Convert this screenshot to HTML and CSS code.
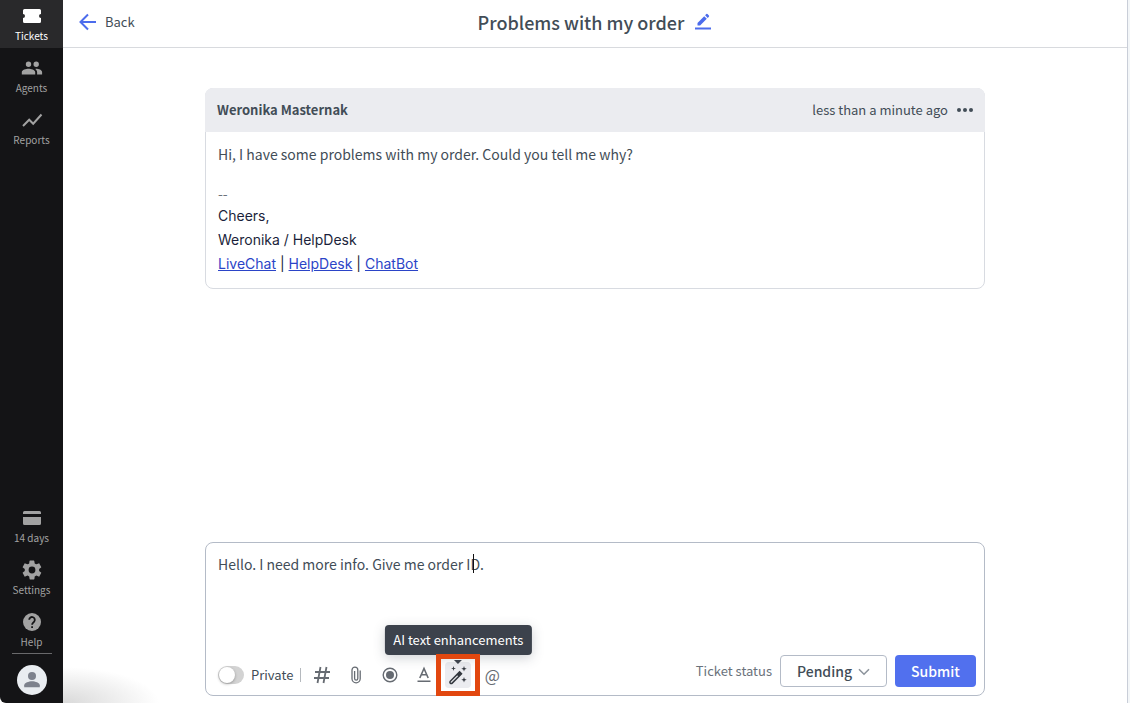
FILE: index.html
```html
<!DOCTYPE html>
<html lang="en">
<head>
    <meta charset="UTF-8">
    <meta name="viewport" content="width=device-width, initial-scale=1.0">
    <title>Problems with my order</title>
    <link rel="stylesheet" href="styles.css">
</head>
<body>
    <nav class="sidebar">
        <a href="#" class="nav-item active">
            <svg width="24" height="24" viewBox="0 0 24 24"><path d="M4.500 5h15A1.500 1.500 0 0 1 21 6.500V10a2 2 0 0 0 0 4v3.500a1.500 1.500 0 0 1-1.500 1.500h-15A1.500 1.500 0 0 1 3 17.500V14a2 2 0 0 0 0-4V6.500A1.500 1.500 0 0 1 4.500 5z"/></svg>
            <span>Tickets</span>
        </a>
        <a href="#" class="nav-item">
            <svg width="24" height="24" viewBox="0 0 24 24"><path d="M16.200 11a2.700 2.700 0 1 0 0-5.400 2.700 2.700 0 0 0 0 5.400zM8.500 11a2.700 2.700 0 1 0 0-5.400 2.700 2.700 0 0 0 0 5.400zM8.500 12.800c-2.300 0-6.700 1.100-6.700 3.400v2.300h13.400v-2.300c0-2.300-4.400-3.400-6.700-3.400zm7.700 0c-.3 0-.6 0-.9.100 1.100.8 1.800 1.900 1.800 3.300v2.300h5v-2.300c0-2.300-3.600-3.400-5.900-3.400z"/></svg>
            <span>Agents</span>
        </a>
        <a href="#" class="nav-item">
            <svg width="24" height="24" viewBox="0 0 24 24"><path d="M3 18l6.200-6.300 4 4L21.500 6.500" fill="none" stroke="currentColor" stroke-width="2"/></svg>
            <span>Reports</span>
        </a>
        <a href="#" class="nav-item first-bottom">
            <svg width="24" height="24" viewBox="0 0 24 24"><path d="M4.500 5h15A1.500 1.500 0 0 1 21 6.500V8H3V6.500A1.500 1.500 0 0 1 4.500 5zM3 11h18v6.500a1.500 1.500 0 0 1-1.500 1.500h-15A1.500 1.500 0 0 1 3 17.500z"/></svg>
            <span>14 days</span>
        </a>
        <a href="#" class="nav-item">
            <svg width="24" height="24" viewBox="0 0 24 24"><path fill-rule="evenodd" d="M19.100 12.900a7 7 0 0 0 0-1.800l2-1.600c.2-.1.200-.4.100-.6l-1.900-3.300c-.1-.2-.4-.3-.6-.2l-2.400.9a7 7 0 0 0-1.600-.9l-.4-2.500a.5.500 0 0 0-.5-.4h-3.800a.5.500 0 0 0-.5.400l-.3 2.500a7 7 0 0 0-1.600.9l-2.400-.9c-.2-.1-.5 0-.6.200L2.700 8.900c-.1.200-.1.500.1.600l2 1.600a7 7 0 0 0 0 1.800l-2 1.600c-.2.100-.2.400-.1.600l1.900 3.300c.1.200.4.300.6.200l2.400-1c.5.400 1 .7 1.600 1l.4 2.500c0 .2.200.4.400.4h3.900c.2 0 .4-.2.500-.4l.3-2.500a7 7 0 0 0 1.600-1l2.400 1c.2.100.5 0 .6-.2l1.900-3.300c.1-.2.1-.5-.1-.6zM12 15.400a3.400 3.400 0 1 1 0-6.800 3.400 3.400 0 0 1 0 6.800z"/></svg>
            <span>Settings</span>
        </a>
        <a href="#" class="nav-item">
            <svg width="24" height="24" viewBox="0 0 24 24"><circle cx="12" cy="12" r="9"/><path d="M9.200 9.800a2.800 2.800 0 1 1 4.800 2c-1 1-1.900 1.400-1.900 3" fill="none" stroke="#141416" stroke-width="1.800"/><path d="M11.200 16.200H13V18h-1.800z" fill="#141416"/></svg>
            <span>Help</span>
        </a>
        <button class="avatar" aria-label="Profile">
            <svg width="20" height="20" viewBox="0 0 20 20"><circle cx="10" cy="6" r="4"/><path d="M2.200 17.200v-2c0-2.400 4.600-4 7.800-4s7.800 1.600 7.800 4v2z"/></svg>
        </button>
    </nav>

    <main class="main">
        <header class="topbar">
            <a href="#" class="back">
                <svg width="18" height="18" viewBox="0 0 18 18"><path d="M17 9H2M9 1.500L1.500 9 9 16.500" fill="none" stroke="#4c6cec" stroke-width="2"/></svg>
                Back
            </a>
            <h1>Problems with my order</h1>
            <button class="edit" aria-label="Edit subject">
                <svg width="18" height="18" viewBox="0 0 18 18" fill="#4c6cec"><path d="M1 14.500h16v2H1zM3.500 12.500V9.900l6.700-6.700 2.600 2.600-6.700 6.700zM11.100 2.300l1.200-1.200a.9.900 0 0 1 1.200 0l1.400 1.400a.9.900 0 0 1 0 1.200l-1.200 1.200z"/></svg>
            </button>
        </header>

        <div class="content">
            <article class="message">
                <div class="message-header">
                    <strong>Weronika Masternak</strong>
                    <span class="time">less than a minute ago</span>
                    <button class="more" aria-label="More options">
                        <svg width="18" height="6" viewBox="0 0 18 6" fill="#424d57"><circle cx="3" cy="3" r="2"/><circle cx="9" cy="3" r="2"/><circle cx="15" cy="3" r="2"/></svg>
                    </button>
                </div>
                <div class="message-body">
                    <p>Hi, I have some problems with my order. Could you tell me why?</p>
                    <div class="signature">
                        <div class="dashes">--</div>
                        <div>Cheers,</div>
                        <div>Weronika / HelpDesk</div>
                        <div><a href="#">LiveChat</a> | <a href="#">HelpDesk</a> | <a href="#">ChatBot</a></div>
                    </div>
                </div>
            </article>

            <form class="editor">
                <textarea aria-label="Reply" spellcheck="false">Hello. I need more info. Give me order ID.</textarea>
                <span class="caret"></span>
                <div class="toolbar">
                    <label class="private">
                        <input type="checkbox">
                        Private
                    </label>
                    <span class="divider"></span>
                    <div class="tools">
                        <button type="button" aria-label="Tags">
                            <svg width="20" height="20" viewBox="0 0 20 20"><path d="M3 7h15M2 13h15M8.500 2L5.500 18M14.500 2l-3 16" stroke-width="1.800"/></svg>
                        </button>
                        <button type="button" aria-label="Attach file">
                            <svg width="20" height="20" viewBox="0 0 20 20"><path d="M14.200 5.500v8.200a4.100 4.100 0 0 1-8.200 0V5a2.900 2.900 0 0 1 5.800 0v8.500a1.600 1.600 0 0 1-3.200 0V6" stroke-width="1.300"/></svg>
                        </button>
                        <button type="button" aria-label="Record">
                            <svg width="20" height="20" viewBox="0 0 20 20"><circle cx="10" cy="10" r="6.800" stroke-width="1.400"/><circle cx="10" cy="10" r="4" fill="#666b72" stroke="none"/></svg>
                        </button>
                        <button type="button" aria-label="Text formatting">
                            <svg width="20" height="20" viewBox="0 0 20 20"><path d="M3.500 16.200h13M5.800 13L10 3.500 14.200 13M7.300 9.800h5.400" stroke-width="1.600"/></svg>
                        </button>
                        <button type="button" class="ai" aria-label="AI text enhancements">
                            <svg width="20" height="20" viewBox="0 0 20 20"><path d="M2.300 16.200L11.600 6.900l1.900 1.900-9.300 9.300a1.300 1.300 0 0 1-1.900-1.900zM9.500 9l1.900 1.900" stroke-width="1.500"/><path d="M11 7.500l.8-.8 2 2-3 3-2-2z" fill="#33383f" stroke="none"/><path d="M5.500 1l.6 1.900 1.900.6-1.900.6-.6 1.900-.6-1.900L3 3.500l1.900-.6zM16 1l.7 2 2 .7-2 .7-.7 2-.7-2-2-.7 2-.7zM16 12l.7 2 2 .7-2 .7-.7 2-.7-2-2-.7 2-.7z" fill="#33383f" stroke="none"/></svg>
                            <span class="tooltip">AI text enhancements</span>
                        </button>
                        <button type="button" class="mention" aria-label="Mention">@</button>
                    </div>
                    <label class="status-label" for="status">Ticket status</label>
                    <div class="status">
                        <select id="status">
                            <option>Pending</option>
                            <option>Open</option>
                            <option>Solved</option>
                        </select>
                        <svg width="12" height="8" viewBox="0 0 12 8"><path d="M1 1.200l5 5 5-5" fill="none" stroke="#8d949c" stroke-width="1.600"/></svg>
                    </div>
                    <button type="submit" class="submit">Submit</button>
                </div>
            </form>
        </div>
    </main>
    <aside class="details"></aside>
</body>
</html>
```
FILE: styles.css
```css
* {
    box-sizing: border-box;
}
body {
    margin: 0;
    display: flex;
    min-height: 100vh;
    background: #fff;
    color: #424d57;
    font-family: "Noto Sans CJK SC", "Noto Sans", sans-serif;
    font-size: 13px;
    line-height: 20px;
}
button, select, textarea {
    font: inherit;
    color: inherit;
    margin: 0;
}
button {
    padding: 0;
    border: none;
    background: none;
    cursor: pointer;
}
svg {
    display: block;
}

/* Sidebar */
.sidebar {
    display: flex;
    flex-direction: column;
    align-items: center;
    gap: 4px;
    width: 63px;
    padding-bottom: 8px;
    background: #141416;
    border-bottom-left-radius: 6px;
}
.nav-item {
    display: flex;
    flex-direction: column;
    align-items: center;
    width: 100%;
    height: 48px;
    padding-top: 4px;
    color: #a2a2a2;
    font-size: 10px;
    line-height: 16px;
    text-decoration: none;
}
.nav-item svg {
    fill: currentColor;
}
.nav-item.active {
    background: #29292b;
    color: #fff;
}
.first-bottom {
    margin-top: auto;
}
.avatar {
    position: relative;
    display: flex;
    align-items: center;
    justify-content: center;
    width: 30px;
    height: 30px;
    margin-top: 7px;
    border-radius: 50%;
    background: #e9edf1;
}
.avatar::before {
    content: "";
    position: absolute;
    top: -12px;
    left: -5px;
    width: 40px;
    height: 1px;
    background: #69696b;
}
.avatar svg {
    fill: #7d828d;
}

/* Main */
.main {
    flex: 1;
    display: flex;
    flex-direction: column;
    background: radial-gradient(ellipse 96px 36px at 0 100%, #d9d9d9, #fff);
}
.topbar {
    position: relative;
    display: flex;
    align-items: center;
    justify-content: center;
    gap: 10px;
    height: 48px;
    padding-bottom: 3px;
    border-bottom: 1px solid #d8dade;
}
.back {
    position: absolute;
    left: 16px;
    display: flex;
    align-items: center;
    gap: 8px;
    color: inherit;
    text-decoration: none;
}
h1 {
    margin: 0;
    font-size: 18px;
    font-weight: 500;
    line-height: 24px;
}
.content {
    flex: 1;
    display: flex;
    flex-direction: column;
    justify-content: space-between;
    width: 100%;
    max-width: 780px;
    margin: 0 auto;
    padding: 40px 0 7px;
}

/* Message */
.message {
    border: 1px solid #d8dbe1;
    border-radius: 8px;
}
.message-header {
    display: flex;
    align-items: center;
    gap: 8px;
    height: 44px;
    margin: -1px -1px 0;
    padding: 0 11px 0 12px;
    border-radius: 8px 8px 0 0;
    background: #ebecf0;
}
.time {
    margin-left: auto;
}
.message-body {
    padding: 12px 12px 12px;
}
.message-body p {
    margin: 0 0 18px;
    font-size: 14px;
}
.signature {
    color: #1b1f3b;
    font-family: Inter, "Liberation Sans", sans-serif;
    font-size: 14px;
    line-height: 24px;
}
.dashes {
    color: #6c727b;
    font-family: "Noto Sans CJK SC", sans-serif;
    line-height: 22px;
}
.signature a {
    color: #2b44c7;
}

/* Editor */
.editor {
    position: relative;
    border: 1px solid #b4bbc7;
    border-radius: 8px;
    background: #fff;
}
textarea {
    display: block;
    width: 100%;
    height: 112px;
    padding: 11px 12px;
    border: none;
    outline: none;
    resize: none;
    background: none;
    font-size: 14px;
}
.caret {
    position: absolute;
    top: 11px;
    left: 267px;
    width: 1px;
    height: 19px;
    background: #111;
}
.toolbar {
    display: flex;
    align-items: center;
    height: 40px;
    padding: 0 8px 8px 12px;
}
.private {
    display: flex;
    align-items: center;
    gap: 7px;
    margin-top: 7px;
}
.private input {
    appearance: none;
    width: 26px;
    height: 18px;
    margin: 0;
    border-radius: 9px;
    background: #d3d3d3;
}
.private input::before {
    content: "";
    display: block;
    width: 16px;
    height: 16px;
    margin: 1px;
    border-radius: 50%;
    background: #fff;
    box-shadow: 0 1px 3px rgba(0,0,0,0.3);
}
.divider {
    width: 1px;
    height: 14px;
    margin: 7px 8px 0 7px;
    background: #b5b9be;
}
.tools {
    display: flex;
    gap: 8px;
    margin-top: 7px;
}
.tools button {
    position: relative;
    display: flex;
    align-items: center;
    justify-content: center;
    width: 26px;
    height: 26px;
    border-radius: 4px;
    color: #666b72;
}
.tools svg {
    fill: none;
    stroke: #666b72;
}
.tools .ai {
    background: #ebecf0;
}
.tools .ai svg {
    stroke: #33383f;
}
.tools .mention {
    font-size: 16px;
}
/* highlight frame around the AI button */
.ai::after {
    content: "";
    position: absolute;
    inset: -8px -9px;
    border: 5px solid #e2470f;
}
.tooltip {
    position: absolute;
    bottom: 33px;
    left: 50%;
    padding: 5px 8px;
    border-radius: 4px;
    background: #3c424c;
    color: #fff;
    white-space: nowrap;
    transform: translateX(-50%);
    box-shadow: 0 3px 12px rgba(66,77,87,0.25);
}
.tooltip::after {
    content: "";
    position: absolute;
    top: 35px;
    left: 50%;
    margin-left: -4px;
    border: 4px solid transparent;
    border-top-color: #3c424c;
    border-bottom: 0;
}
.status-label {
    margin-left: auto;
    color: #6a727b;
}
.status {
    position: relative;
    margin: 0 8px;
}
select {
    appearance: none;
    display: block;
    width: 107px;
    height: 32px;
    padding: 0 16px;
    border: 1px solid #b4bbc7;
    border-radius: 4px;
    background: #fff;
    font-size: 14px;
    font-weight: 500;
}
.status svg {
    position: absolute;
    top: 13px;
    right: 17px;
    pointer-events: none;
}
.submit {
    width: 81px;
    height: 32px;
    border-radius: 4px;
    background: #5170ee;
    color: #fff;
    font-size: 14px;
    font-weight: 500;
}

/* Collapsed details panel */
.details {
    width: 3px;
    border-left: 1px solid #c9ced8;
    background: #f3f6f8;
}
```
